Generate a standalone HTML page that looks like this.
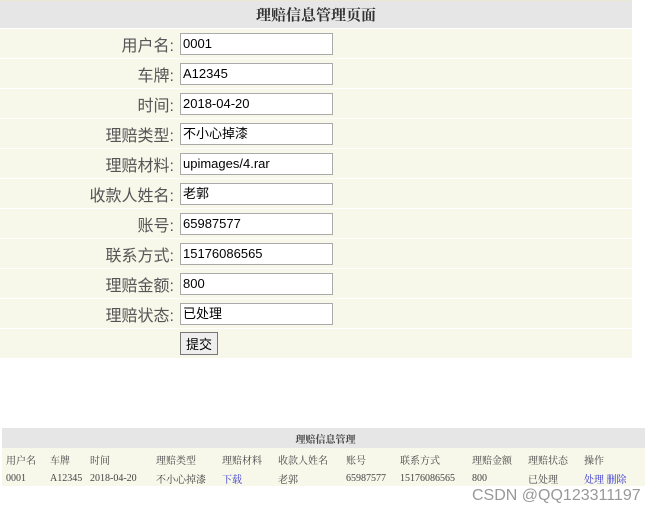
<!DOCTYPE html>
<html><head><meta charset="utf-8"><style>
body{margin:0;background:#fff;font-family:"Liberation Serif","Noto Serif CJK SC",serif;width:662px;height:516px;position:relative;overflow:hidden}
.t{position:absolute;left:0;top:0;width:632px;border-collapse:collapse}
.t td{border-bottom:1px solid #fff;border-top:1px solid #ebe9d3;background:#f7f7ea;padding:0;height:29px}
.t .h{background:#e6e6e6;height:27px;text-align:center;font-weight:bold;font-size:15px;color:#333}
.l{width:174px;text-align:right;font-size:16px;color:#555;font-family:"Liberation Sans","Noto Sans CJK SC",sans-serif;padding-right:4px !important}
.in{display:block;margin-left:2px;width:149px;height:20px;border:1px solid #aaa;background:#fff;font:13px "Liberation Sans","Noto Sans CJK SC",sans-serif;line-height:20px;padding-left:2px;color:#000;box-sizing:content-box}
.btn{margin-left:2px;display:inline-block;border:1px solid #777;background:#eee;font:13px "Liberation Sans","Noto Sans CJK SC",sans-serif;padding:1px 5px}
.b{position:absolute;left:2px;top:428px;width:643px;border-collapse:collapse;font-size:10px;color:#444;table-layout:fixed}
.b td{background:#f7f7ea;padding:0 0 0 4px;height:16px;white-space:nowrap;overflow:hidden}
.b .hh{background:#e6e6e6;text-align:center;font-weight:bold;height:20px}
a{color:#33c}
</style></head><body>
<table class="t">
<tr><td colspan="2" class="h">理赔信息管理页面</td></tr>
<tr><td class="l">用户名:</td><td><span class="in">0001</span></td></tr>
<tr><td class="l">车牌:</td><td><span class="in">A12345</span></td></tr>
<tr><td class="l">时间:</td><td><span class="in">2018-04-20</span></td></tr>
<tr><td class="l">理赔类型:</td><td><span class="in">不小心掉漆</span></td></tr>
<tr><td class="l">理赔材料:</td><td><span class="in">upimages/4.rar</span></td></tr>
<tr><td class="l">收款人姓名:</td><td><span class="in">老郭</span></td></tr>
<tr><td class="l">账号:</td><td><span class="in">65987577</span></td></tr>
<tr><td class="l">联系方式:</td><td><span class="in">15176086565</span></td></tr>
<tr><td class="l">理赔金额:</td><td><span class="in">800</span></td></tr>
<tr><td class="l">理赔状态:</td><td><span class="in">已处理</span></td></tr>
<tr><td class="l"></td><td style="height:27px"><span class="btn">提交</span></td></tr>
</table>
<table class="b">
<colgroup><col style="width:44px"><col style="width:40px"><col style="width:66px"><col style="width:66px"><col style="width:56px"><col style="width:68px"><col style="width:54px"><col style="width:72px"><col style="width:56px"><col style="width:56px"><col></colgroup>
<tr><td colspan="11" class="hh">理赔信息管理</td></tr>
<tr style="height:22px"><td>用户名</td><td>车牌</td><td>时间</td><td>理赔类型</td><td>理赔材料</td><td>收款人姓名</td><td>账号</td><td>联系方式</td><td>理赔金额</td><td>理赔状态</td><td>操作</td></tr>
<tr><td>0001</td><td>A12345</td><td>2018-04-20</td><td>不小心掉漆</td><td><a>下载</a></td><td>老郭</td><td>65987577</td><td>15176086565</td><td>800</td><td>已处理</td><td><a>处理</a> <a>删除</a></td></tr>
</table>
<div style="position:absolute;left:472px;top:487px;font:16px 'Liberation Sans',sans-serif;color:#999">CSDN @QQ123311197</div>
</body></html>
